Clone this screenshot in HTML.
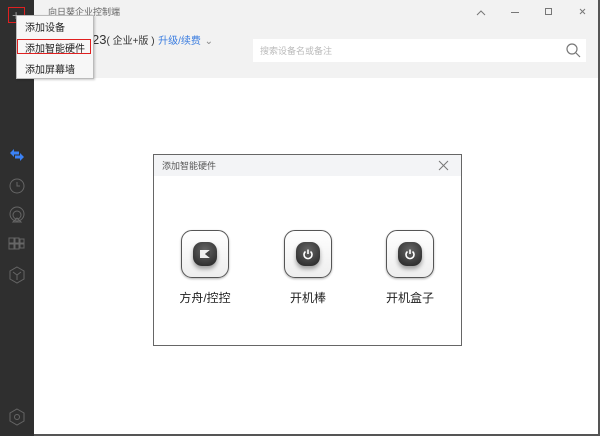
<html><head><style>
body{margin:0;width:600px;height:436px;position:relative;overflow:hidden;font-family:"Liberation Sans","Noto Sans CJK SC",sans-serif;background:#fff}
.abs{position:absolute}
.box{position:absolute;top:230px;width:46px;height:46px;border:1.5px solid #555;border-radius:11px;background:linear-gradient(#fff,#eee);box-shadow:0 1px 2px rgba(0,0,0,.3)}
.btn{position:absolute;left:11px;top:11px;width:24px;height:24px;border-radius:9px;background:radial-gradient(circle at 50% 35%,#666,#222);box-shadow:0 3px 4px rgba(0,0,0,.35)}
.lbl{position:absolute;top:289px;font-size:12px;color:#222;width:100px;text-align:center}
</style></head><body>
<div class="abs" style="left:0;top:0;width:34px;height:436px;background:#2f2f2f"></div>
<div class="abs" style="left:34px;top:0;width:566px;height:78px;background:#f2f2f2"></div>
<div class="abs" style="left:598px;top:0;width:2px;height:436px;background:#555"></div>
<div class="abs" style="left:34px;top:434px;width:566px;height:2px;background:#555"></div>
<div class="abs" style="left:48px;top:5px;font-size:9px;color:#666">向日葵企业控制端</div>
<div class="abs" style="left:92px;top:32px;font-size:13px;color:#333">23<span style="font-size:10px">( 企业+版 )</span> <span style="font-size:10px;color:#3b7de0">升级/续费</span> <span style="font-size:10px;color:#888">⌄</span></div>
<div class="abs" style="left:253px;top:39px;width:333px;height:23px;background:#fff"></div>
<div class="abs" style="left:260px;top:44px;font-size:9px;color:#bbb">搜索设备名或备注</div>
<svg class="abs" style="left:565px;top:42px" width="16" height="16"><circle cx="7" cy="7" r="5" fill="none" stroke="#777" stroke-width="1.2"/><path d="M11 11l4 4" stroke="#777" stroke-width="1.2"/></svg>
<svg class="abs" style="left:470px;top:4px" width="125" height="16" fill="none" stroke="#777" stroke-width="1"><path d="M7 11l4-4 4 4"/><path d="M41 8.5h8"/><rect x="75.5" y="4.5" width="6" height="6"/><path d="M110 5l5 5M115 5l-5 5"/></svg>
<!-- sidebar icons -->
<svg class="abs" style="left:0;top:140px" width="34" height="296" fill="none" stroke="#666" stroke-width="1">
<path d="M10 13l4-4v2.5h5v3h-5V17zM24 17l-4 4v-2.5h-5v-3h5V13z" fill="#3b82f6" stroke="none"/>
<circle cx="17" cy="46" r="7"/><path d="M17 42v4h3"/>
<circle cx="17" cy="74" r="7"/><circle cx="17" cy="75" r="4"/><path d="M13 82l4-4 4 4z"/>
<path d="M9 98h5v5h-5zM15 98h4v5h-4zM20 99h4v4h-4zM9 104h5v5h-5zM15 104h4v5h-4zM20 104h4v4h-4z"/>
<path d="M17 127l7 4v8l-7 4-7-4v-8z"/><path d="M17 135v5M17 135l-4-3M17 135l4-3"/>
<path d="M17 269l7 4v8l-7 4-7-4v-8z"/><circle cx="17" cy="277" r="2.5"/>
</svg>
<!-- plus and menu -->
<div class="abs" style="left:8px;top:7px;width:15px;height:14px;border:1.5px solid #e02020"></div>
<div class="abs" style="left:12px;top:8px;font-size:14px;line-height:14px;color:#999">+</div>
<div class="abs" style="left:16px;top:15px;width:76px;height:62px;background:#f7f7f7;border:1px solid #bbb;box-shadow:1px 1px 2px rgba(0,0,0,.2)"></div>
<div class="abs" style="left:25px;top:19px;font-size:10px;color:#222">添加设备</div>
<div class="abs" style="left:17px;top:39px;width:74px;height:15px;border:1.5px solid #e02020;box-sizing:border-box"></div>
<div class="abs" style="left:25px;top:40px;font-size:10px;color:#222">添加智能硬件</div>
<div class="abs" style="left:25px;top:61px;font-size:10px;color:#222">添加屏幕墙</div>
<!-- dialog -->
<div class="abs" style="left:153px;top:154px;width:307px;height:190px;border:1px solid #666;background:#fff"></div>
<div class="abs" style="left:154px;top:155px;width:307px;height:21px;background:#f3f4f6"></div>
<div class="abs" style="left:162px;top:159px;font-size:9px;color:#555">添加智能硬件</div>
<svg class="abs" style="left:438px;top:160px" width="11" height="11" stroke="#777" stroke-width="1"><path d="M1 1l9 9M10 1l-9 9"/></svg>
<div class="box" style="left:181px"><div class="btn"><svg width="24" height="24"><path d="M7 8h10l-5 4 5 4H7z" fill="#fff" opacity=".9"/><path d="M12 12l5-4v8z" fill="#444"/></svg></div></div>
<div class="box" style="left:284px"><div class="btn"><svg width="24" height="24" fill="none" stroke="#fff" stroke-width="1.6"><path d="M9.5 9.5a4 4 0 1 0 5 0"/><path d="M12 7.5v4.5"/></svg></div></div>
<div class="box" style="left:386px"><div class="btn"><svg width="24" height="24" fill="none" stroke="#fff" stroke-width="1.6"><path d="M9.5 9.5a4 4 0 1 0 5 0"/><path d="M12 7.5v4.5"/></svg></div></div>
<div class="lbl" style="left:155px">方舟/控控</div>
<div class="lbl" style="left:258px">开机棒</div>
<div class="lbl" style="left:360px">开机盒子</div>
</body></html>
